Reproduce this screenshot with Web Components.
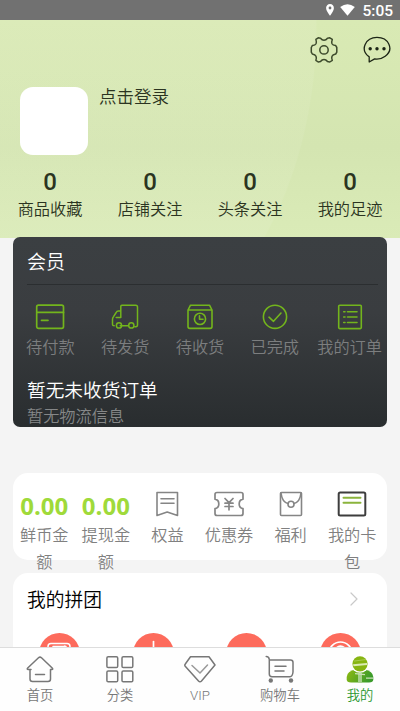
<!DOCTYPE html>
<html lang="zh-CN"><head><meta charset="utf-8"><title>我的</title>
<style>
html,body{margin:0;height:711px;overflow:hidden;background:#f4f4f4}
body{font-family:Roboto,"Noto Sans CJK SC",sans-serif;font-weight:350;color:#2b3421}
</style></head><body>
<my-page></my-page>
<script>
const icons = {
pin:['0 0 8 12','<path d="M4 0C1.6 0 .1 1.7.1 4c0 3 3.9 7.8 3.9 7.8S7.900 7 7.900 4C7.900 1.700 6.400 0 4 0z" fill="#fff"/><circle cx="4" cy="4" r="1.400" fill="#717171"/>'],
wifi:['0 0 15 12','<path d="M.2 3Q7.500-2.400 14.800 3L7.500 11.700z" fill="#fff"/>'],
gear:['0 0 28 28','<path d="M8.200 1.800L10.500 2.200Q12 4.300 14 4.300Q16 4.300 17.500 2.200L19.800 1.800L22.300 3.400Q21.300 6 22 7.700Q22.700 9.200 25.700 9.600L26.800 11.500V16.200L25.700 18Q22.700 18.600 22 20.200Q21.300 22 22.300 24.300L19.800 26L17.500 25.500Q16 23.500 14 23.500Q12 23.500 10.500 25.500L8.200 26L5.900 24.300Q6.800 22 6 20.200Q5.300 18.600 2.300 18L1.300 16.200V11.500L2.300 9.600Q5.300 9.200 6 7.700Q6.700 6 5.900 3.400Z"/><circle cx="14" cy="13.900" r="4.200"/>','stroke:#3d4a2c;stroke-width:1.500'],
chat:['0 0 28 28','<path d="M6.200 26V20.900C-3.500 13.900 2.500 1.400 14 1.400S31.500 13.300 22.200 20.200C18.600 23 14.500 23.300 11.600 22.900Z"/><g fill="#1c2515" stroke="none"><circle cx="7.200" cy="12.800" r="1.700"/><circle cx="14" cy="12.800" r="1.700"/><circle cx="21" cy="12.800" r="1.700"/></g>','stroke:#1c2515;stroke-width:1.300'],
pay:['0 0 30 26','<rect x="1.700" y="1.200" width="26.800" height="23.200" rx="1.800"/><path d="M2 8.400H28.500M6.500 16.300H13"/>','stroke:#73b51c;stroke-width:1.700'],
truck:['0 0 30 26','<path d="M10.200 21.800H18.200M24.700 22.800H25.800Q27.500 22.800 27.500 20.800V3Q27.500 1.200 25.700 1.200H11.800Q10.800 1.200 10.800 2.400V13.600H6.200M10.800 7H8.300Q6.900 7 6.200 8.500L3.500 12.600Q2.500 13.900 2.500 15.500V20.500Q2.500 21.800 4.200 21.800"/><circle cx="9" cy="21.400" r="2.600"/><circle cx="21.300" cy="21.400" r="2.600"/>','stroke:#73b51c;stroke-width:1.500'],
box:['0 0 30 26','<path d="M3 6L5.500 1.200H24.500L27 6V22.600Q27 24.400 25.200 24.400H4.800Q3 24.400 3 22.600ZM3 6H27"/><circle cx="15" cy="14.900" r="5.600"/><path d="M14.500 11.900V15.300H18"/>','stroke:#73b51c;stroke-width:1.600'],
done:['0 0 30 26','<circle cx="15" cy="12.800" r="11.600"/><path d="M9 13.200L13.500 17.300L21 9"/>','stroke:#73b51c;stroke-width:1.600'],
list:['0 0 30 26','<rect x="3.700" y="1.200" width="22.600" height="23.400" rx="1"/><path d="M8.700 7.700H10M12.500 7.700H22M8.700 13H10M12.500 13H22M8.700 18.500H10M12.500 18.500H22"/>','stroke:#73b51c;stroke-width:1.600'],
right:['0 0 32 28','<path d="M6 2.500H26.500V25.500L16.200 22L6 25.500ZM10 8.800H23M10 13.200H23"/>','stroke:#858585;stroke-width:1.600'],
coupon:['0 0 32 28','<path d="M4 2.500H28Q30 2.500 30 4.500V9.200A4.800 4.800 0 0 0 30 18.600V23.500Q30 25.500 28 25.500H4Q2 25.500 2 23.500V18.600A4.800 4.800 0 0 0 2 9.200V4.500Q2 2.500 4 2.500Z"/><path d="M12 8.500L16 12.700L20 8.500M16 12.500V19.800M12 13.200H20M12 16.500H20" stroke-width="1.700"/>','stroke:#858585;stroke-width:1.700'],
gift:['0 0 32 28','<rect x="5.500" y="2.500" width="21" height="23" rx="1"/><path d="M6 3Q7 12 13 13.500M26 3Q25 12 19 13.500"/><circle cx="16" cy="14.200" r="3"/>','stroke:#858585;stroke-width:1.600'],
card:['0 0 32 28','<rect x="2.700" y="2.600" width="26.600" height="23" rx="1.500"/><path d="M7.500 7.700H24.500M7.500 12.800H24.500" stroke="#8bb43c"/>','stroke:#3d3d3d;stroke-width:2'],
chev:['0 0 10 16','<path d="M2 2L8 8L2 14"/>','stroke:#c9c9c9;stroke-width:1.200'],
home:['0 0 32 30','<path d="M7 14.500H4.200Q2.500 14.500 3.700 13L14.500 2.800Q16 1.500 17.500 2.800L28.200 13Q29.500 14.500 27.800 14.500H26.500V24Q26.500 26.500 24 26.500H8.500Q6 26.500 6 24V14.500M11.500 19.600H20.500"/>','stroke:#777;stroke-width:1.500'],
grid:['0 0 32 30','<rect x="2.900" y="1.700" width="10.800" height="10.800" rx="1.300"/><rect x="18" y="1.700" width="10.800" height="10.800" rx="1.300"/><rect x="2.900" y="16" width="10.800" height="10.800" rx="1.300"/><rect x="18" y="16" width="10.800" height="10.800" rx="1.300"/>','stroke:#777;stroke-width:1.500'],
vip:['0 0 32 30','<path d="M6.500 1.700H25L31 10L17.500 26Q16 27.700 14.500 26L1 11Q.5 10 1.300 9Z"/><path d="M8 10.500L16 18L23.500 10" stroke="#999"/>','stroke:#777;stroke-width:1.500'],
cart:['0 0 32 30','<path d="M2.200 1.500Q5 1.500 5.300 4.500V19Q5.300 21.700 8 21.700H26Q28.500 21.700 29 17V7.500Q29 5 26.500 5H5.500M11 11.200H22M11 16H20"/><g fill="#777" stroke="none"><circle cx="6.800" cy="25.500" r="2.200"/><circle cx="27" cy="25.500" r="2.200"/></g>','stroke:#777;stroke-width:1.500'],
user:['0 0 32 30','<defs><linearGradient id="g" x2="1" y2=".3"><stop stop-color="#8fba12"/><stop offset="1" stop-color="#3b9b2b"/></linearGradient></defs><g stroke="none"><path d="M11.500 14.500Q3 16 2.700 22V24.500Q2.700 27.500 7 27.500H25Q29.300 27.500 29.300 24.500V22Q29 16 20.500 14.500Z" fill="url(#g)"/><circle cx="16" cy="8.800" r="9" fill="#fff"/><circle cx="16" cy="8.800" r="7.600" fill="#87b512"/><path d="M9 9.300L23 8V10L9.500 11.200Z" fill="#dcebb6"/><path d="M10.500 6L21.500 4.600" stroke="#a8ca51"/><path d="M14 18H18V27.500H14Z" fill="#a7d08c"/><path d="M11 18L21 19V20.300L11 19.300ZM22 22.500H29V23.700H22Z" fill="#cbe2b5"/></g>','stroke:none'],
g1:['0 0 41 41','<rect x="9" y="10.500" width="22" height="20" rx="3"/><path d="M14 13.500H27M16 17L26 13"/>','stroke:#fff;stroke-width:1.500'],
g2:['0 0 41 41','<path d="M20.500 8.500V24"/>','stroke:#fff;stroke-width:1.700'],
g3:['0 0 41 41',''],
g4:['0 0 41 41','<circle cx="20.500" cy="20.500" r="11.500"/><path d="M15 16.500Q20 10 26 16"/>','stroke:#fff;stroke-width:1.700']
};
function define(name, html){
  customElements.define(name, class extends HTMLElement{
    connectedCallback(){
      if(this.shadowRoot) return;
      this.attachShadow({mode:'open'}).innerHTML = typeof html==='function' ? html(this) : html;
    }
  });
}
define('ui-icon', el=>{
  const [box,body,style=''] = icons[el.getAttribute('name')];
  const [, , w,h] = box.split(' ');
  return `<style>:host{display:block;width:${w}px;height:${h}px;flex:none}svg{display:block;fill:none;stroke-linecap:round;stroke-linejoin:round;${style}}</style><svg width="${w}" height="${h}" viewBox="${box}">${body}</svg>`;
});
define('status-bar', `<style>:host{display:flex;height:20px;background:#717171;align-items:center;justify-content:flex-end;padding-right:7px;color:#fff;font:500 15.500px/22px Roboto,sans-serif}span{margin-left:7px;padding-top:2px}.w{margin-left:6px}</style><ui-icon name="pin"></ui-icon><ui-icon class="w" name="wifi"></ui-icon><span>5:05</span>`);
define('stat-item', `<style>:host{flex:1;text-align:center;display:block}b{display:block;font:500 24px/28px Roboto,sans-serif}span{display:block;font-size:16.200px;line-height:24px;margin-top:2px}</style><b>0</b><span><slot></slot></span>`);
define('profile-header', `<style>:host{display:flex;flex-direction:column;height:218px;background:radial-gradient(ellipse 240px 340px at 77px 6px,#fff1 0 99.500%,#fff0 100%),linear-gradient(#d9eab4,#d4e5b1 58%,#daebb7)}
.tools{display:flex;justify-content:flex-end;gap:25px;padding:16px 9px 0 0;height:28px}
.user{display:flex;gap:11px;padding:23px 0 0 20px;height:68px;font-size:17.500px;line-height:20px}
.avatar{width:68px;height:68px;border-radius:13px;background:#fff}
.stats{display:flex;margin-top:13px}</style>
<div class="tools"><ui-icon name="gear"></ui-icon><ui-icon name="chat"></ui-icon></div>
<div class="user"><div class="avatar"></div><div>点击登录</div></div>
<div class="stats"><stat-item>商品收藏</stat-item><stat-item>店铺关注</stat-item><stat-item>头条关注</stat-item><stat-item>我的足迹</stat-item></div>`);
define('order-item', el=>`<style>:host{flex:1;display:flex;flex-direction:column;align-items:center;color:#7c7e7f;font-size:16.200px;line-height:24px;white-space:nowrap}span{margin-top:6px}</style><ui-icon name="${el.getAttribute('icon')}"></ui-icon><span><slot></slot></span>`);
define('order-card', `<style>:host{display:block;box-sizing:border-box;height:190px;margin:-1px 13px 0;border-radius:7px;overflow:hidden;background:linear-gradient(#3b3f42,#3a3d40 40%,#292d2f);color:#fff}
h2{font-size:19px;line-height:28px;font-weight:350;margin:0 9px 0 14px;padding:12px 0 7px;border-bottom:1px solid #2b2e30}
.row{display:flex;margin-top:19px}
.t{font-size:18.700px;line-height:28px;margin:17px 0 0 14px}.s{font-size:16.200px;line-height:24px;margin-left:14px;color:#858788}</style>
<h2>会员</h2><div class="row"><order-item icon="pay">待付款</order-item><order-item icon="truck">待发货</order-item><order-item icon="box">待收货</order-item><order-item icon="done">已完成</order-item><order-item icon="list">我的订单</order-item></div>
<div class="t">暂无未收货订单</div><div class="s">暂无物流信息</div>`);
define('asset-item', el=>`<style>:host{flex:1 1 0;min-width:0;display:flex;flex-direction:column;align-items:center;color:#808080;font-size:16.200px;line-height:27px;text-align:center}b{font:700 24px/28px "Open Sans",sans-serif;color:#9fda3a;height:28px;position:relative;top:2px}span{width:49px;margin-top:4px}</style>${el.hasAttribute('icon')?`<ui-icon name="${el.getAttribute('icon')}"></ui-icon>`:'<b>0.00</b>'}<span><slot></slot></span>`);
define('asset-card', `<style>:host{display:flex;box-sizing:border-box;height:87px;margin:46px 13px 0;padding:17px 4px 0 .5px;border-radius:15px;background:#fff}</style><asset-item>鲜币金额</asset-item><asset-item>提现金额</asset-item><asset-item icon="right">权益</asset-item><asset-item icon="coupon">优惠券</asset-item><asset-item icon="gift">福利</asset-item><asset-item icon="card">我的卡包</asset-item>`);
define('group-card', `<style>:host{display:block;height:74px;margin:13px 13px 0;border-radius:15px 15px 0 0;background:#fff;overflow:hidden;color:#000}
.h{display:flex;justify-content:space-between;align-items:center;padding:12px 28px 0 14px;height:28px;font-size:18.800px}.h span{padding-bottom:2px}
.r{display:flex;margin-top:20px}.r div{flex:1;display:flex;justify-content:center}.r ui-icon{background:#fd6b5c;border-radius:50%}</style>
<div class="h"><span>我的拼团</span><ui-icon name="chev"></ui-icon></div><div class="r"><div><ui-icon name="g1"></ui-icon></div><div><ui-icon name="g2"></ui-icon></div><div><ui-icon name="g3"></ui-icon></div><div><ui-icon name="g4"></ui-icon></div></div>`);
define('tab-item', el=>`<style>:host{flex:1;display:flex;flex-direction:column;align-items:center;padding-top:7px;font-size:13.300px;line-height:20px;color:#777}:host([active]){color:#2b9830}span{margin-top:1px}</style><ui-icon name="${el.getAttribute('icon')}"></ui-icon><span><slot></slot></span>`);
define('tab-bar', `<style>:host{display:flex;box-sizing:border-box;height:64px;border-top:1px solid #ddd;background:#fefefe}</style><tab-item icon="home">首页</tab-item><tab-item icon="grid">分类</tab-item><tab-item icon="vip">VIP</tab-item><tab-item icon="cart">购物车</tab-item><tab-item icon="user" active>我的</tab-item>`);
define('my-page', `<style>:host{display:flex;flex-direction:column;width:400px;height:711px}:host>*{flex:none}status-bar,profile-header,order-card,asset-card,group-card,tab-bar{flex:none}</style><status-bar></status-bar><profile-header></profile-header><order-card></order-card><asset-card></asset-card><group-card></group-card><tab-bar></tab-bar>`);
</script></body></html>
